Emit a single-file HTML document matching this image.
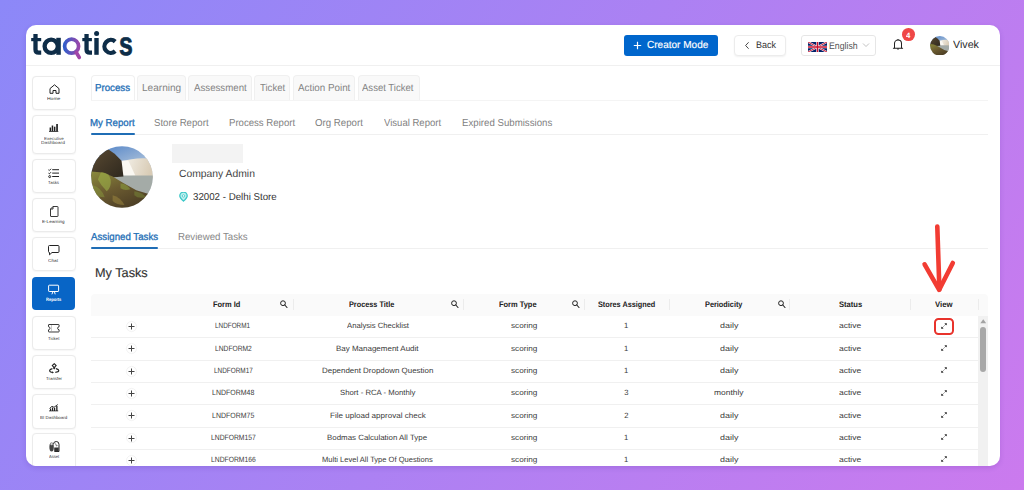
<!DOCTYPE html>
<html><head><meta charset="utf-8"><style>
html,body{margin:0;padding:0;}
body{width:1024px;height:490px;overflow:hidden;position:relative;font-family:"Liberation Sans", sans-serif;text-rendering:geometricPrecision;
background:linear-gradient(122deg,#8c88f8 0%,#cb7aee 100%);}
.t{position:absolute;white-space:nowrap;transform-origin:0 0;text-rendering:geometricPrecision;}
.a{position:absolute;box-sizing:border-box;}
</style></head><body>
<div style="position:absolute;left:26px;top:25px;width:974px;height:441px;border-radius:10px;overflow:hidden;background:#fff;box-shadow:0 2px 5px rgba(70,30,140,0.16);"><div style="position:absolute;left:-26px;top:-25px;width:1024px;height:490px;">
<div class="a" style="left:26px;top:65px;width:974px;height:1px;background:#f0f0f0;"></div><svg class="a" style="left:0;top:0" width="150" height="70" viewBox="0 0 150 70">
<defs><linearGradient id="qg" x1="63" y1="0" x2="80" y2="0" gradientUnits="userSpaceOnUse"><stop offset="0" stop-color="#2a5fcc"/><stop offset="1" stop-color="#a046a8"/></linearGradient></defs>
<g fill="none" stroke="#0e2d48" stroke-width="4.3">
<path d="M35.5 34V49.5Q35.5 52.7 38.7 52.7H41.2"/>
<circle cx="51.2" cy="46.3" r="6.6"/>
<path d="M86.55 34V49.5Q86.55 52.7 89.75 52.7H92"/>
<path d="M115.2 41.6A6.45 6.45 0 1 0 115.2 51.2"/>
</g>
<g fill="#0e2d48">
<rect x="31.2" y="38" width="10" height="3.2"/>
<rect x="56.3" y="37.8" width="4.5" height="17"/>
<rect x="82.3" y="38" width="9.6" height="3.2"/>
<rect x="94.3" y="38" width="4.4" height="16.8"/>
<circle cx="96.6" cy="33.4" r="2.5"/>
<text x="119" y="55.2" font-family="Liberation Sans" font-weight="700" font-size="33" textLength="13.8" lengthAdjust="spacingAndGlyphs" stroke="#0e2d48" stroke-width="0.7">s</text>
</g>
<circle cx="71.6" cy="46.2" r="7.0" fill="none" stroke="url(#qg)" stroke-width="3.7"/>
<path d="M76.4 52.6L79.2 57.4" stroke="#a046a8" stroke-width="3.8" stroke-linecap="round"/>
</svg><div class="a" style="left:624px;top:35px;width:94px;height:21px;background:#0066cc;border-radius:3px;"></div><svg class="a" style="left:633px;top:41px" width="9" height="9"><path d="M4.5 0.8V8.2M0.8 4.5H8.2" stroke="#fff" stroke-width="1.2"/></svg><div class="a" style="left:734px;top:35px;width:52px;height:21px;background:#fff;border:1px solid #ececec;border-radius:4px;box-shadow:0 1px 2px rgba(0,0,0,0.06);"></div><svg class="a" style="left:744px;top:41px" width="7" height="9"><path d="M4.6 1.3L1.6 4.5L4.6 7.7" fill="none" stroke="#333" stroke-width="0.9"/></svg><div class="a" style="left:801px;top:35px;width:75px;height:21px;background:#fff;border:1px solid #e6e6e6;border-radius:3px;"></div><svg class="a" style="left:808px;top:41.5px" width="19" height="10" viewBox="0 0 60 30" preserveAspectRatio="none">
<rect width="60" height="30" fill="#012169"/>
<path d="M0,0 L60,30 M60,0 L0,30" stroke="#fff" stroke-width="6"/>
<path d="M0,0 L60,30 M60,0 L0,30" stroke="#C8102E" stroke-width="3"/>
<path d="M30,0 V30 M0,15 H60" stroke="#fff" stroke-width="8"/>
<path d="M30,0 V30 M0,15 H60" stroke="#C8102E" stroke-width="4.5"/>
</svg><svg class="a" style="left:862px;top:42px" width="8" height="6"><path d="M1 1.5L4 4.5L7 1.5" fill="none" stroke="#bbb" stroke-width="0.9"/></svg><svg class="a" style="left:891px;top:38px" width="14" height="14" viewBox="0 0 14 14">
<path d="M3.5 10.2V5.6A3.5 3.6 0 0 1 10.5 5.6V10.2" fill="none" stroke="#222" stroke-width="1.05"/>
<path d="M2.4 10.2H11.6" stroke="#222" stroke-width="1.1" stroke-linecap="round"/>
<path d="M6 10.6L7 12.2L8 10.6Z" fill="#222"/>
<circle cx="7" cy="1.6" r="0.7" fill="#222"/>
</svg><div class="a" style="left:901.9px;top:28.2px;width:12.8px;height:12.8px;border-radius:50%;background:#ef4747;color:#fff;font-size:8px;line-height:12.8px;"></div><svg class="a" style="left:929.6px;top:35.6px" width="19.6" height="19.6" viewBox="0 0 63 63">
<defs><clipPath id="pc2"><circle cx="31.5" cy="31.5" r="31.3"/></clipPath></defs>
<g clip-path="url(#pc2)">
<rect width="63" height="63" fill="url(#sky)"/>
<path d="M30 16 Q45 11 63 13 V33 H30Z" fill="url(#mist)"/>
<path d="M30 15 L38 15 L45 30 L32 31Z" fill="#faf8f2"/>
<rect x="18" y="30" width="45" height="19" fill="#a4aba7"/>
<path d="M0 12 L10 6 L17 3 L24 8 L31 15 L33 31 L20 32 L0 31Z" fill="url(#rock)"/>
<path d="M0 26 L12 27 L22 31 L32 37 L46 45 L63 50 V63 H0Z" fill="url(#veg)"/>
</g></svg><div class="a" style="left:32.2px;top:76px;width:43.6px;height:34px;background:#fff;border:1px solid #ebebeb;border-radius:4px;box-shadow:0 0.5px 1.5px rgba(0,0,0,0.04);"></div><div class="a" style="left:32.2px;top:115px;width:43.6px;height:39px;background:#fff;border:1px solid #ebebeb;border-radius:4px;box-shadow:0 0.5px 1.5px rgba(0,0,0,0.04);"></div><div class="a" style="left:32.2px;top:159px;width:43.6px;height:34px;background:#fff;border:1px solid #ebebeb;border-radius:4px;box-shadow:0 0.5px 1.5px rgba(0,0,0,0.04);"></div><div class="a" style="left:32.2px;top:198px;width:43.6px;height:34px;background:#fff;border:1px solid #ebebeb;border-radius:4px;box-shadow:0 0.5px 1.5px rgba(0,0,0,0.04);"></div><div class="a" style="left:32.2px;top:237px;width:43.6px;height:34px;background:#fff;border:1px solid #ebebeb;border-radius:4px;box-shadow:0 0.5px 1.5px rgba(0,0,0,0.04);"></div><div class="a" style="left:32.4px;top:277px;width:43px;height:33.2px;background:#0865c6;border-radius:4px;"></div><div class="a" style="left:32.2px;top:315.5px;width:43.6px;height:34.5px;background:#fff;border:1px solid #ebebeb;border-radius:4px;box-shadow:0 0.5px 1.5px rgba(0,0,0,0.04);"></div><div class="a" style="left:32.2px;top:355px;width:43.6px;height:34px;background:#fff;border:1px solid #ebebeb;border-radius:4px;box-shadow:0 0.5px 1.5px rgba(0,0,0,0.04);"></div><div class="a" style="left:32.2px;top:394px;width:43.6px;height:34.5px;background:#fff;border:1px solid #ebebeb;border-radius:4px;box-shadow:0 0.5px 1.5px rgba(0,0,0,0.04);"></div><div class="a" style="left:32.2px;top:433px;width:43.6px;height:40px;background:#fff;border:1px solid #ebebeb;border-radius:4px;box-shadow:0 0.5px 1.5px rgba(0,0,0,0.04);"></div><svg class="a" style="left:48.5px;top:83.8px;overflow:visible" width="11" height="10" viewBox="0 0 11 10"><path d="M1 9.3V4.6L5.5 0.8L10 4.6V9.3H7V6.5H4V9.3Z" fill="none" stroke="#222" stroke-width="1" stroke-linejoin="round"/></svg><svg class="a" style="left:49px;top:124px;overflow:visible" width="9.5" height="8" viewBox="0 0 9.5 8"><g fill="#222"><rect x="0.6" y="3.5" width="1.5" height="3.7"/><rect x="2.7" y="1.5" width="1.5" height="5.7"/><rect x="4.9" y="2.7" width="1.5" height="4.5"/><rect x="7.2" y="0" width="1.7" height="7.2"/><rect x="0" y="7.2" width="9.3" height="0.8"/></g></svg><svg class="a" style="left:48px;top:167.5px;overflow:visible" width="11" height="10.5" viewBox="0 0 11 10.5"><g stroke="#222" fill="none" stroke-width="1"><path d="M0.5 1.8L1.3 2.5L3 0.8"/><path d="M0.5 5.2L1.3 5.9L3 4.2"/><circle cx="1.7" cy="8.6" r="1"/></g><g fill="#222"><rect x="4.2" y="1.2" width="6.8" height="1"/><rect x="4.2" y="4.6" width="6.8" height="1"/><rect x="4.2" y="8" width="6.8" height="1"/></g></svg><svg class="a" style="left:49.5px;top:206px;overflow:visible" width="8.5" height="11" viewBox="0 0 8.5 11"><path d="M0.5 3L3 0.5H7.5Q8 0.5 8 1V10Q8 10.5 7.5 10.5H1Q0.5 10.5 0.5 10Z M0.5 3H3V0.5" fill="none" stroke="#222" stroke-width="0.9" stroke-linejoin="round"/></svg><svg class="a" style="left:48px;top:245px;overflow:visible" width="11.5" height="10.5" viewBox="0 0 11.5 10.5"><path d="M1.5 0.5H10Q11 0.5 11 1.5V6.5Q11 7.5 10 7.5H4L1.5 9.8V7.5Q0.5 7.5 0.5 6.5V1.5Q0.5 0.5 1.5 0.5Z" fill="none" stroke="#222" stroke-width="1" stroke-linejoin="round"/></svg><svg class="a" style="left:48px;top:284px;overflow:visible" width="11" height="11" viewBox="0 0 11 11"><g stroke="#fff" fill="none" stroke-width="1"><rect x="0.6" y="1.2" width="10" height="6.3" rx="0.6"/><path d="M5 7.6L3.9 10.3M6.4 7.6L7.2 10.3"/></g></svg><svg class="a" style="left:48px;top:324.3px;overflow:visible" width="11.6" height="8.5" viewBox="0 0 11.6 8.5"><path d="M1 0.5H10.6Q11.1 0.5 11.1 1V2.7Q9.6 2.9 9.6 4.25Q9.6 5.6 11.1 5.8V7.5Q11.1 8 10.6 8H1Q0.5 8 0.5 7.5V5.8Q2 5.6 2 4.25Q2 2.9 0.5 2.7V1Q0.5 0.5 1 0.5Z" fill="none" stroke="#222" stroke-width="0.9"/><path d="M3.5 1.5V7" stroke="#222" stroke-width="0.5" stroke-dasharray="1 1"/></svg><svg class="a" style="left:48.5px;top:362.5px;overflow:visible" width="10.5" height="10.5" viewBox="0 0 10.5 10.5"><g fill="none" stroke="#222" stroke-width="1.1"><path d="M5.2 0.7L7.1 2.6L5.2 4.6L3.3 2.6Z"/><path d="M3.4 5.6Q0.6 6.3 0.6 7.6Q0.6 9.3 3.8 9.5"/><path d="M7 5.6Q9.8 6.3 9.8 7.6Q9.8 9.2 6.3 9.4"/><path d="M4.2 4.7L5.2 5.8L6.2 4.7"/></g><path d="M3.2 8.2L4.9 9.4L3.2 10.4Z" fill="#222"/></svg><svg class="a" style="left:48.8px;top:403.7px;overflow:visible" width="9.5" height="7.5" viewBox="0 0 9.5 7.5"><g fill="#222"><rect x="1" y="4.5" width="1.2" height="2.5"/><rect x="3" y="3.5" width="1.2" height="3.5"/><rect x="5" y="3.8" width="1.2" height="3.2"/><rect x="7.2" y="2" width="1.3" height="5"/><rect x="0" y="6.5" width="9.2" height="0.8"/></g><path d="M0.5 4.5L3 2.3L5 3.3L8.8 0.5" fill="none" stroke="#222" stroke-width="0.9"/></svg><svg class="a" style="left:48.5px;top:441px;overflow:visible" width="10.5" height="11" viewBox="0 0 10.5 11"><path d="M4.5 3.2Q4.5 0.5 7.3 0.5Q10 0.5 10 3.4V10.5H5.5" fill="none" stroke="#222" stroke-width="1"/><path d="M6.5 2.5L7.5 5L8.5 4.5" fill="none" stroke="#555" stroke-width="0.8"/><ellipse cx="2.6" cy="6" rx="2.2" ry="4.6" fill="#444"/><circle cx="2.6" cy="3" r="1.2" fill="#ccc"/><rect x="5.2" y="6.5" width="4.5" height="4" fill="#333"/></svg><div class="a" style="left:90.7px;top:75.3px;width:44.6px;height:26px;background:#fff;border:1px solid #f0f0f0;border-bottom:none;border-radius:4px 4px 0 0;"></div><div class="a" style="left:137px;top:75.3px;width:49.3px;height:26px;background:#f9f9f9;border:1px solid #f0f0f0;border-bottom:none;border-radius:4px 4px 0 0;"></div><div class="a" style="left:188px;top:75.3px;width:64.0px;height:26px;background:#f9f9f9;border:1px solid #f0f0f0;border-bottom:none;border-radius:4px 4px 0 0;"></div><div class="a" style="left:254px;top:75.3px;width:36.3px;height:26px;background:#f9f9f9;border:1px solid #f0f0f0;border-bottom:none;border-radius:4px 4px 0 0;"></div><div class="a" style="left:292.5px;top:75.3px;width:62.9px;height:26px;background:#f9f9f9;border:1px solid #f0f0f0;border-bottom:none;border-radius:4px 4px 0 0;"></div><div class="a" style="left:357.5px;top:75.3px;width:62.4px;height:26px;background:#f9f9f9;border:1px solid #f0f0f0;border-bottom:none;border-radius:4px 4px 0 0;"></div><div class="a" style="left:90.5px;top:99.9px;width:897.5px;height:1px;background:#f4f4f4;"></div><div class="a" style="left:90.5px;top:134.3px;width:897.5px;height:1px;background:#f0f0f0;"></div><div class="a" style="left:90.7px;top:132.5px;width:44px;height:2.2px;background:#1f6db5;border-radius:1px;"></div><svg class="a" style="left:91.3px;top:145.5px" width="62" height="62" viewBox="0 0 63 63">
<defs><clipPath id="pc"><circle cx="31.5" cy="31.5" r="31.3"/></clipPath>
<linearGradient id="sky" x1="0" y1="0" x2="0.4" y2="1"><stop offset="0" stop-color="#4c7fc6"/><stop offset="0.6" stop-color="#b5c8dc"/><stop offset="1" stop-color="#e2e6e6"/></linearGradient>
<linearGradient id="mist" x1="0" y1="0" x2="1" y2="0.2"><stop offset="0" stop-color="#f6f4ee"/><stop offset="1" stop-color="#d9ccb6"/></linearGradient>
<linearGradient id="veg" x1="0" y1="0" x2="0.7" y2="1"><stop offset="0" stop-color="#8a8a3c"/><stop offset="0.5" stop-color="#6a5a30"/><stop offset="1" stop-color="#4a3c24"/></linearGradient>
<linearGradient id="rock" x1="0" y1="0" x2="1" y2="1"><stop offset="0" stop-color="#5a4a32"/><stop offset="1" stop-color="#2e281e"/></linearGradient></defs>
<g clip-path="url(#pc)">
<rect width="63" height="63" fill="url(#sky)"/>
<path d="M30 16 Q45 11 63 13 V33 H30Z" fill="url(#mist)"/>
<path d="M30 15 L38 15 L45 30 L32 31Z" fill="#faf8f2"/>
<rect x="18" y="30" width="45" height="19" fill="#a4aba7"/>
<path d="M0 12 L10 6 L17 3 L24 8 L31 15 L33 31 L20 32 L0 31Z" fill="url(#rock)"/>
<path d="M0 26 L12 27 L22 31 L32 37 L46 45 L63 50 V63 H0Z" fill="url(#veg)"/>
<path d="M10 27 Q18 26 20 34 Q21 42 16 46 Q10 40 7 34Z" fill="#9cb048" opacity="0.6"/><path d="M2 40 Q10 42 14 52 Q6 52 2 48Z" fill="#8a9a3e" opacity="0.5"/><path d="M22 50 Q30 52 34 60 Q26 60 22 56Z" fill="#a08a40" opacity="0.5"/>
<path d="M30 38 Q36 38 40 44 Q34 46 30 43Z" fill="#8a9c3c" opacity="0.6"/>
<path d="M44 46 Q52 47 56 52 Q48 54 44 50Z" fill="#7a8a38" opacity="0.5"/>
</g></svg><div class="a" style="left:172.3px;top:144px;width:71px;height:19px;background:#f3f3f3;"></div><svg class="a" style="left:178.5px;top:192px" width="9" height="9.5" viewBox="0 0 9 9.5"><path d="M4.5 9Q0.8 5.6 0.8 3.9A3.7 3.7 0 0 1 8.2 3.9Q8.2 5.6 4.5 9Z" fill="#bdeeee" stroke="#3cc8c8" stroke-width="1.3"/><circle cx="4.5" cy="3.9" r="1.2" fill="#fff" stroke="#3cc8c8" stroke-width="0.8"/></svg><div class="a" style="left:90.5px;top:248px;width:897.5px;height:1px;background:#f0f0f0;"></div><div class="a" style="left:90.8px;top:247px;width:67.2px;height:2.2px;background:#1f6db5;border-radius:1px;"></div><div class="a" style="left:90.8px;top:294px;width:897.2px;height:21.5px;background:#fafafa;border-radius:4px 4px 0 0;"></div><div class="a" style="left:292.5px;top:298.5px;width:1px;height:11px;background:#ececec;"></div><div class="a" style="left:463.3px;top:298.5px;width:1px;height:11px;background:#ececec;"></div><div class="a" style="left:583.6px;top:298.5px;width:1px;height:11px;background:#ececec;"></div><div class="a" style="left:669.0px;top:298.5px;width:1px;height:11px;background:#ececec;"></div><div class="a" style="left:789.4px;top:298.5px;width:1px;height:11px;background:#ececec;"></div><div class="a" style="left:910.0px;top:298.5px;width:1px;height:11px;background:#ececec;"></div><div class="a" style="left:978.0px;top:298.5px;width:1px;height:11px;background:#ececec;"></div><svg class="a" style="left:279.7px;top:299.5px;overflow:visible" width="8" height="8.5" viewBox="0 0 8 8.5"><circle cx="3" cy="3.2" r="2.4" fill="none" stroke="#222" stroke-width="1"/><path d="M4.8 5L7 7.5" stroke="#222" stroke-width="1.1" stroke-linecap="round"/></svg><svg class="a" style="left:451.4px;top:299.5px;overflow:visible" width="8" height="8.5" viewBox="0 0 8 8.5"><circle cx="3" cy="3.2" r="2.4" fill="none" stroke="#222" stroke-width="1"/><path d="M4.8 5L7 7.5" stroke="#222" stroke-width="1.1" stroke-linecap="round"/></svg><svg class="a" style="left:572.0px;top:299.5px;overflow:visible" width="8" height="8.5" viewBox="0 0 8 8.5"><circle cx="3" cy="3.2" r="2.4" fill="none" stroke="#222" stroke-width="1"/><path d="M4.8 5L7 7.5" stroke="#222" stroke-width="1.1" stroke-linecap="round"/></svg><svg class="a" style="left:777.9000000000001px;top:299.5px;overflow:visible" width="8" height="8.5" viewBox="0 0 8 8.5"><circle cx="3" cy="3.2" r="2.4" fill="none" stroke="#222" stroke-width="1"/><path d="M4.8 5L7 7.5" stroke="#222" stroke-width="1.1" stroke-linecap="round"/></svg><div class="a" style="left:90.8px;top:337.30px;width:887.2px;height:1px;background:#f0f0f0;"></div><div class="a" style="left:126.20px;top:321.15px;width:10.8px;height:10.8px;border-radius:50%;border:1px solid #f3f3f3;"></div><svg class="a" style="left:128px;top:323px;overflow:visible" width="7" height="7" viewBox="0 0 7 7"><path d="M3.5 0.5V6.5M0.5 3.5H6.5" stroke="#444" stroke-width="1"/></svg><svg class="a" style="left:940px;top:321.65px;overflow:visible" width="8" height="8" viewBox="0 0 8 8"><path d="M2.4 5.6L5.6 2.4" stroke="#666" stroke-width="0.5"/><path d="M1.5 6.5L1.7 4.9L3.1 6.3Z M6.5 1.5L4.9 1.7L6.3 3.1Z" fill="#222" stroke="#222" stroke-width="0.6" stroke-linejoin="round"/></svg><div class="a" style="left:90.8px;top:359.60px;width:887.2px;height:1px;background:#f0f0f0;"></div><div class="a" style="left:126.20px;top:343.45px;width:10.8px;height:10.8px;border-radius:50%;border:1px solid #f3f3f3;"></div><svg class="a" style="left:128px;top:345px;overflow:visible" width="7" height="7" viewBox="0 0 7 7"><path d="M3.5 0.5V6.5M0.5 3.5H6.5" stroke="#444" stroke-width="1"/></svg><svg class="a" style="left:940px;top:343.95px;overflow:visible" width="8" height="8" viewBox="0 0 8 8"><path d="M2.4 5.6L5.6 2.4" stroke="#666" stroke-width="0.5"/><path d="M1.5 6.5L1.7 4.9L3.1 6.3Z M6.5 1.5L4.9 1.7L6.3 3.1Z" fill="#222" stroke="#222" stroke-width="0.6" stroke-linejoin="round"/></svg><div class="a" style="left:90.8px;top:381.90px;width:887.2px;height:1px;background:#f0f0f0;"></div><div class="a" style="left:126.20px;top:365.75px;width:10.8px;height:10.8px;border-radius:50%;border:1px solid #f3f3f3;"></div><svg class="a" style="left:128px;top:368px;overflow:visible" width="7" height="7" viewBox="0 0 7 7"><path d="M3.5 0.5V6.5M0.5 3.5H6.5" stroke="#444" stroke-width="1"/></svg><svg class="a" style="left:940px;top:366.25px;overflow:visible" width="8" height="8" viewBox="0 0 8 8"><path d="M2.4 5.6L5.6 2.4" stroke="#666" stroke-width="0.5"/><path d="M1.5 6.5L1.7 4.9L3.1 6.3Z M6.5 1.5L4.9 1.7L6.3 3.1Z" fill="#222" stroke="#222" stroke-width="0.6" stroke-linejoin="round"/></svg><div class="a" style="left:90.8px;top:404.20px;width:887.2px;height:1px;background:#f0f0f0;"></div><div class="a" style="left:126.20px;top:388.05px;width:10.8px;height:10.8px;border-radius:50%;border:1px solid #f3f3f3;"></div><svg class="a" style="left:128px;top:390px;overflow:visible" width="7" height="7" viewBox="0 0 7 7"><path d="M3.5 0.5V6.5M0.5 3.5H6.5" stroke="#444" stroke-width="1"/></svg><svg class="a" style="left:940px;top:388.54999999999995px;overflow:visible" width="8" height="8" viewBox="0 0 8 8"><path d="M2.4 5.6L5.6 2.4" stroke="#666" stroke-width="0.5"/><path d="M1.5 6.5L1.7 4.9L3.1 6.3Z M6.5 1.5L4.9 1.7L6.3 3.1Z" fill="#222" stroke="#222" stroke-width="0.6" stroke-linejoin="round"/></svg><div class="a" style="left:90.8px;top:426.50px;width:887.2px;height:1px;background:#f0f0f0;"></div><div class="a" style="left:126.20px;top:410.35px;width:10.8px;height:10.8px;border-radius:50%;border:1px solid #f3f3f3;"></div><svg class="a" style="left:128px;top:412px;overflow:visible" width="7" height="7" viewBox="0 0 7 7"><path d="M3.5 0.5V6.5M0.5 3.5H6.5" stroke="#444" stroke-width="1"/></svg><svg class="a" style="left:940px;top:410.84999999999997px;overflow:visible" width="8" height="8" viewBox="0 0 8 8"><path d="M2.4 5.6L5.6 2.4" stroke="#666" stroke-width="0.5"/><path d="M1.5 6.5L1.7 4.9L3.1 6.3Z M6.5 1.5L4.9 1.7L6.3 3.1Z" fill="#222" stroke="#222" stroke-width="0.6" stroke-linejoin="round"/></svg><div class="a" style="left:90.8px;top:448.80px;width:887.2px;height:1px;background:#f0f0f0;"></div><div class="a" style="left:126.20px;top:432.65px;width:10.8px;height:10.8px;border-radius:50%;border:1px solid #f3f3f3;"></div><svg class="a" style="left:128px;top:435px;overflow:visible" width="7" height="7" viewBox="0 0 7 7"><path d="M3.5 0.5V6.5M0.5 3.5H6.5" stroke="#444" stroke-width="1"/></svg><svg class="a" style="left:940px;top:433.15px;overflow:visible" width="8" height="8" viewBox="0 0 8 8"><path d="M2.4 5.6L5.6 2.4" stroke="#666" stroke-width="0.5"/><path d="M1.5 6.5L1.7 4.9L3.1 6.3Z M6.5 1.5L4.9 1.7L6.3 3.1Z" fill="#222" stroke="#222" stroke-width="0.6" stroke-linejoin="round"/></svg><div class="a" style="left:90.8px;top:471.10px;width:887.2px;height:1px;background:#f0f0f0;"></div><div class="a" style="left:126.20px;top:454.95px;width:10.8px;height:10.8px;border-radius:50%;border:1px solid #f3f3f3;"></div><svg class="a" style="left:128px;top:457px;overflow:visible" width="7" height="7" viewBox="0 0 7 7"><path d="M3.5 0.5V6.5M0.5 3.5H6.5" stroke="#444" stroke-width="1"/></svg><svg class="a" style="left:940px;top:455.45px;overflow:visible" width="8" height="8" viewBox="0 0 8 8"><path d="M2.4 5.6L5.6 2.4" stroke="#666" stroke-width="0.5"/><path d="M1.5 6.5L1.7 4.9L3.1 6.3Z M6.5 1.5L4.9 1.7L6.3 3.1Z" fill="#222" stroke="#222" stroke-width="0.6" stroke-linejoin="round"/></svg><div class="a" style="left:978.3px;top:315.5px;width:9.8px;height:151px;background:#f1f1f1;"></div><svg class="a" style="left:980px;top:319px" width="6.5" height="4.5"><path d="M3.25 0.3L6.2 4.2H0.3Z" fill="#a3a3a3"/></svg><div class="a" style="left:980.4px;top:327.2px;width:5.8px;height:45px;background:#a8a8a8;border-radius:3px;"></div>
<span class="t" style="left:647.00px;top:41.02px;font-size:10.145px;line-height:10.145px;color:#ffffff;font-weight:400;transform:scaleX(0.9902);-webkit-text-stroke:0.15px;">Creator Mode</span><span class="t" style="left:755.78px;top:41.03px;font-size:9.565px;line-height:9.565px;color:#333333;font-weight:400;transform:scaleX(0.9393);">Back</span><span class="t" style="left:829.30px;top:42.02px;font-size:9.565px;line-height:9.565px;color:#555555;font-weight:400;transform:scaleX(0.9160);">English</span><span class="t" style="left:906.08px;top:32.04px;font-size:7.626px;line-height:7.626px;color:#ffffff;font-weight:700;transform:scaleX(1.0199);">4</span><span class="t" style="left:953.00px;top:40.03px;font-size:10.725px;line-height:10.725px;color:#2a2a2a;font-weight:400;transform:scaleX(0.9967);">Vivek</span><span class="t" style="left:95.22px;top:84.02px;font-size:10.145px;line-height:10.145px;color:#246fb6;font-weight:400;transform:scaleX(0.9583);-webkit-text-stroke:0.3px;">Process</span><span class="t" style="left:142.09px;top:84.02px;font-size:10.145px;line-height:10.145px;color:#838383;font-weight:400;transform:scaleX(0.9934);">Learning</span><span class="t" style="left:193.80px;top:84.02px;font-size:10.145px;line-height:10.145px;color:#838383;font-weight:400;transform:scaleX(0.9561);">Assessment</span><span class="t" style="left:259.81px;top:84.02px;font-size:10.145px;line-height:10.145px;color:#838383;font-weight:400;transform:scaleX(0.9452);">Ticket</span><span class="t" style="left:297.70px;top:84.02px;font-size:10.145px;line-height:10.145px;color:#838383;font-weight:400;transform:scaleX(0.9684);">Action Point</span><span class="t" style="left:362.40px;top:84.02px;font-size:10.145px;line-height:10.145px;color:#838383;font-weight:400;transform:scaleX(0.9427);">Asset Ticket</span><span class="t" style="left:89.92px;top:119.04px;font-size:10.145px;line-height:10.145px;color:#246fb6;font-weight:400;transform:scaleX(0.9554);-webkit-text-stroke:0.3px;">My Report</span><span class="t" style="left:154.37px;top:119.04px;font-size:10.145px;line-height:10.145px;color:#7f7f7f;font-weight:400;transform:scaleX(0.9504);">Store Report</span><span class="t" style="left:228.73px;top:119.04px;font-size:10.145px;line-height:10.145px;color:#7f7f7f;font-weight:400;transform:scaleX(0.9468);">Process Report</span><span class="t" style="left:315.16px;top:119.04px;font-size:10.145px;line-height:10.145px;color:#7f7f7f;font-weight:400;transform:scaleX(0.9558);">Org Report</span><span class="t" style="left:384.20px;top:119.04px;font-size:10.145px;line-height:10.145px;color:#7f7f7f;font-weight:400;transform:scaleX(0.9425);">Visual Report</span><span class="t" style="left:461.63px;top:119.04px;font-size:10.145px;line-height:10.145px;color:#7f7f7f;font-weight:400;transform:scaleX(0.9545);">Expired Submissions</span><span class="t" style="left:178.58px;top:170.03px;font-size:10.435px;line-height:10.435px;color:#444444;font-weight:400;transform:scaleX(0.9924);">Company Admin</span><span class="t" style="left:193.06px;top:193.04px;font-size:10.000px;line-height:10.000px;color:#333333;font-weight:400;transform:scaleX(0.9719);">32002 - Delhi Store</span><span class="t" style="left:90.80px;top:233.02px;font-size:10.145px;line-height:10.145px;color:#246fb6;font-weight:400;transform:scaleX(0.9568);-webkit-text-stroke:0.3px;">Assigned Tasks</span><span class="t" style="left:177.92px;top:233.02px;font-size:10.145px;line-height:10.145px;color:#888888;font-weight:400;transform:scaleX(0.9552);">Reviewed Tasks</span><span class="t" style="left:94.88px;top:267.03px;font-size:12.754px;line-height:12.754px;color:#333333;font-weight:400;transform:scaleX(0.9966);-webkit-text-stroke:0.15px;">My Tasks</span><span class="t" style="left:212.91px;top:301.02px;font-size:8.058px;line-height:8.058px;color:#222222;font-weight:700;transform:scaleX(0.9267);">Form Id</span><span class="t" style="left:349.33px;top:301.02px;font-size:8.058px;line-height:8.058px;color:#222222;font-weight:700;transform:scaleX(0.9058);">Process Title</span><span class="t" style="left:498.71px;top:301.02px;font-size:8.058px;line-height:8.058px;color:#222222;font-weight:700;transform:scaleX(0.9268);">Form Type</span><span class="t" style="left:598.12px;top:301.02px;font-size:8.058px;line-height:8.058px;color:#222222;font-weight:700;transform:scaleX(0.9053);">Stores Assigned</span><span class="t" style="left:704.52px;top:301.02px;font-size:8.058px;line-height:8.058px;color:#222222;font-weight:700;transform:scaleX(0.9099);">Periodicity</span><span class="t" style="left:838.51px;top:301.02px;font-size:8.058px;line-height:8.058px;color:#222222;font-weight:700;transform:scaleX(0.9448);">Status</span><span class="t" style="left:935.36px;top:301.02px;font-size:8.058px;line-height:8.058px;color:#222222;font-weight:700;transform:scaleX(0.9674);">View</span><span class="t" style="left:215.44px;top:322.02px;font-size:7.681px;line-height:7.681px;color:#3a3a3a;font-weight:400;transform:scaleX(0.8309);">LNDFORM1</span><span class="t" style="left:346.90px;top:322.02px;font-size:7.681px;line-height:7.681px;color:#3a3a3a;font-weight:400;transform:scaleX(1.0020);">Analysis Checklist</span><span class="t" style="left:510.90px;top:322.02px;font-size:7.681px;line-height:7.681px;color:#3a3a3a;font-weight:400;transform:scaleX(1.0623);">scoring</span><span class="t" style="left:624.05px;top:322.02px;font-size:7.681px;line-height:7.681px;color:#3a3a3a;font-weight:400;transform:scaleX(1.0000);">1</span><span class="t" style="left:719.84px;top:322.02px;font-size:7.681px;line-height:7.681px;color:#3a3a3a;font-weight:400;transform:scaleX(1.1620);">daily</span><span class="t" style="left:838.61px;top:322.02px;font-size:7.681px;line-height:7.681px;color:#3a3a3a;font-weight:400;transform:scaleX(1.1058);">active</span><span class="t" style="left:214.56px;top:345.02px;font-size:7.681px;line-height:7.681px;color:#3a3a3a;font-weight:400;transform:scaleX(0.8721);">LNDFORM2</span><span class="t" style="left:336.06px;top:345.02px;font-size:7.681px;line-height:7.681px;color:#3a3a3a;font-weight:400;transform:scaleX(1.0403);">Bay Management Audit</span><span class="t" style="left:510.90px;top:345.02px;font-size:7.681px;line-height:7.681px;color:#3a3a3a;font-weight:400;transform:scaleX(1.0623);">scoring</span><span class="t" style="left:624.05px;top:345.02px;font-size:7.681px;line-height:7.681px;color:#3a3a3a;font-weight:400;transform:scaleX(1.0000);">1</span><span class="t" style="left:719.84px;top:345.02px;font-size:7.681px;line-height:7.681px;color:#3a3a3a;font-weight:400;transform:scaleX(1.1620);">daily</span><span class="t" style="left:838.61px;top:345.02px;font-size:7.681px;line-height:7.681px;color:#3a3a3a;font-weight:400;transform:scaleX(1.1058);">active</span><span class="t" style="left:213.59px;top:367.03px;font-size:7.681px;line-height:7.681px;color:#3a3a3a;font-weight:400;transform:scaleX(0.8342);">LNDFORM17</span><span class="t" style="left:322.06px;top:367.03px;font-size:7.681px;line-height:7.681px;color:#3a3a3a;font-weight:400;transform:scaleX(1.0364);">Dependent Dropdown Question</span><span class="t" style="left:510.90px;top:367.03px;font-size:7.681px;line-height:7.681px;color:#3a3a3a;font-weight:400;transform:scaleX(1.0623);">scoring</span><span class="t" style="left:624.05px;top:367.03px;font-size:7.681px;line-height:7.681px;color:#3a3a3a;font-weight:400;transform:scaleX(1.0000);">1</span><span class="t" style="left:719.84px;top:367.03px;font-size:7.681px;line-height:7.681px;color:#3a3a3a;font-weight:400;transform:scaleX(1.1620);">daily</span><span class="t" style="left:838.61px;top:367.03px;font-size:7.681px;line-height:7.681px;color:#3a3a3a;font-weight:400;transform:scaleX(1.1058);">active</span><span class="t" style="left:211.79px;top:389.03px;font-size:7.681px;line-height:7.681px;color:#3a3a3a;font-weight:400;transform:scaleX(0.9103);">LNDFORM48</span><span class="t" style="left:339.80px;top:389.03px;font-size:7.681px;line-height:7.681px;color:#3a3a3a;font-weight:400;transform:scaleX(1.0097);">Short - RCA - Monthly</span><span class="t" style="left:510.90px;top:389.03px;font-size:7.681px;line-height:7.681px;color:#3a3a3a;font-weight:400;transform:scaleX(1.0623);">scoring</span><span class="t" style="left:624.19px;top:389.03px;font-size:7.681px;line-height:7.681px;color:#3a3a3a;font-weight:400;transform:scaleX(1.0000);">3</span><span class="t" style="left:714.15px;top:389.03px;font-size:7.681px;line-height:7.681px;color:#3a3a3a;font-weight:400;transform:scaleX(1.0986);">monthly</span><span class="t" style="left:838.61px;top:389.03px;font-size:7.681px;line-height:7.681px;color:#3a3a3a;font-weight:400;transform:scaleX(1.1058);">active</span><span class="t" style="left:211.79px;top:412.02px;font-size:7.681px;line-height:7.681px;color:#3a3a3a;font-weight:400;transform:scaleX(0.9103);">LNDFORM75</span><span class="t" style="left:329.66px;top:412.02px;font-size:7.681px;line-height:7.681px;color:#3a3a3a;font-weight:400;transform:scaleX(1.0485);">File upload approval check</span><span class="t" style="left:510.90px;top:412.02px;font-size:7.681px;line-height:7.681px;color:#3a3a3a;font-weight:400;transform:scaleX(1.0623);">scoring</span><span class="t" style="left:624.15px;top:412.02px;font-size:7.681px;line-height:7.681px;color:#3a3a3a;font-weight:400;transform:scaleX(1.0000);">2</span><span class="t" style="left:719.84px;top:412.02px;font-size:7.681px;line-height:7.681px;color:#3a3a3a;font-weight:400;transform:scaleX(1.1620);">daily</span><span class="t" style="left:838.61px;top:412.02px;font-size:7.681px;line-height:7.681px;color:#3a3a3a;font-weight:400;transform:scaleX(1.1058);">active</span><span class="t" style="left:210.56px;top:434.02px;font-size:7.681px;line-height:7.681px;color:#3a3a3a;font-weight:400;transform:scaleX(0.8831);">LNDFORM157</span><span class="t" style="left:327.37px;top:434.02px;font-size:7.681px;line-height:7.681px;color:#3a3a3a;font-weight:400;transform:scaleX(1.0306);">Bodmas Calculation All Type</span><span class="t" style="left:510.90px;top:434.02px;font-size:7.681px;line-height:7.681px;color:#3a3a3a;font-weight:400;transform:scaleX(1.0623);">scoring</span><span class="t" style="left:624.05px;top:434.02px;font-size:7.681px;line-height:7.681px;color:#3a3a3a;font-weight:400;transform:scaleX(1.0000);">1</span><span class="t" style="left:719.84px;top:434.02px;font-size:7.681px;line-height:7.681px;color:#3a3a3a;font-weight:400;transform:scaleX(1.1620);">daily</span><span class="t" style="left:838.61px;top:434.02px;font-size:7.681px;line-height:7.681px;color:#3a3a3a;font-weight:400;transform:scaleX(1.1058);">active</span><span class="t" style="left:210.56px;top:456.02px;font-size:7.681px;line-height:7.681px;color:#3a3a3a;font-weight:400;transform:scaleX(0.8824);">LNDFORM166</span><span class="t" style="left:322.05px;top:456.02px;font-size:7.681px;line-height:7.681px;color:#3a3a3a;font-weight:400;transform:scaleX(0.9844);">Multi Level All Type Of Questions</span><span class="t" style="left:510.90px;top:456.02px;font-size:7.681px;line-height:7.681px;color:#3a3a3a;font-weight:400;transform:scaleX(1.0623);">scoring</span><span class="t" style="left:624.05px;top:456.02px;font-size:7.681px;line-height:7.681px;color:#3a3a3a;font-weight:400;transform:scaleX(1.0000);">1</span><span class="t" style="left:719.84px;top:456.02px;font-size:7.681px;line-height:7.681px;color:#3a3a3a;font-weight:400;transform:scaleX(1.1620);">daily</span><span class="t" style="left:838.61px;top:456.02px;font-size:7.681px;line-height:7.681px;color:#3a3a3a;font-weight:400;transform:scaleX(1.1058);">active</span><span class="t" style="left:47.00px;top:97.02px;font-size:4.348px;line-height:4.348px;color:#333;font-weight:400;transform:scaleX(1.1562);">Home</span><span class="t" style="left:43.58px;top:137.02px;font-size:4.348px;line-height:4.348px;color:#444;font-weight:400;transform:scaleX(1.0533);">Executive</span><span class="t" style="left:41.46px;top:141.03px;font-size:4.348px;line-height:4.348px;color:#444;font-weight:400;transform:scaleX(1.1280);">Dashboard</span><span class="t" style="left:47.96px;top:181.02px;font-size:4.348px;line-height:4.348px;color:#333;font-weight:400;transform:scaleX(0.9839);">Tasks</span><span class="t" style="left:42.43px;top:220.03px;font-size:4.348px;line-height:4.348px;color:#333;font-weight:400;transform:scaleX(1.0651);">E-Learning</span><span class="t" style="left:48.36px;top:259.02px;font-size:4.348px;line-height:4.348px;color:#333;font-weight:400;transform:scaleX(1.0945);">Chat</span><span class="t" style="left:45.83px;top:298.03px;font-size:4.638px;line-height:4.638px;color:#fff;font-weight:700;transform:scaleX(0.8796);">Reports</span><span class="t" style="left:48.16px;top:337.02px;font-size:4.348px;line-height:4.348px;color:#333;font-weight:400;transform:scaleX(0.9969);">Ticket</span><span class="t" style="left:45.71px;top:377.03px;font-size:4.348px;line-height:4.348px;color:#333;font-weight:400;transform:scaleX(1.0074);">Transfer</span><span class="t" style="left:39.94px;top:416.02px;font-size:4.348px;line-height:4.348px;color:#333;font-weight:400;transform:scaleX(1.0319);">BI Dashboard</span><span class="t" style="left:48.55px;top:455.03px;font-size:4.348px;line-height:4.348px;color:#333;font-weight:400;transform:scaleX(0.9483);">Asset</span>
<div class="a" style="left:933.8px;top:318px;width:20.4px;height:16.8px;border:2px solid #e8332c;border-radius:4.5px;"></div>
<svg class="a" style="left:915px;top:220px" width="45" height="75" viewBox="0 0 45 75"><g fill="none" stroke="#f23c33" stroke-width="4.6" stroke-linecap="round" stroke-linejoin="round"><path d="M22.3 6.6L24.4 69.5"/><path d="M9.6 44.3L24.2 69.8L37.8 43"/></g></svg>
</div></div>
</body></html>
